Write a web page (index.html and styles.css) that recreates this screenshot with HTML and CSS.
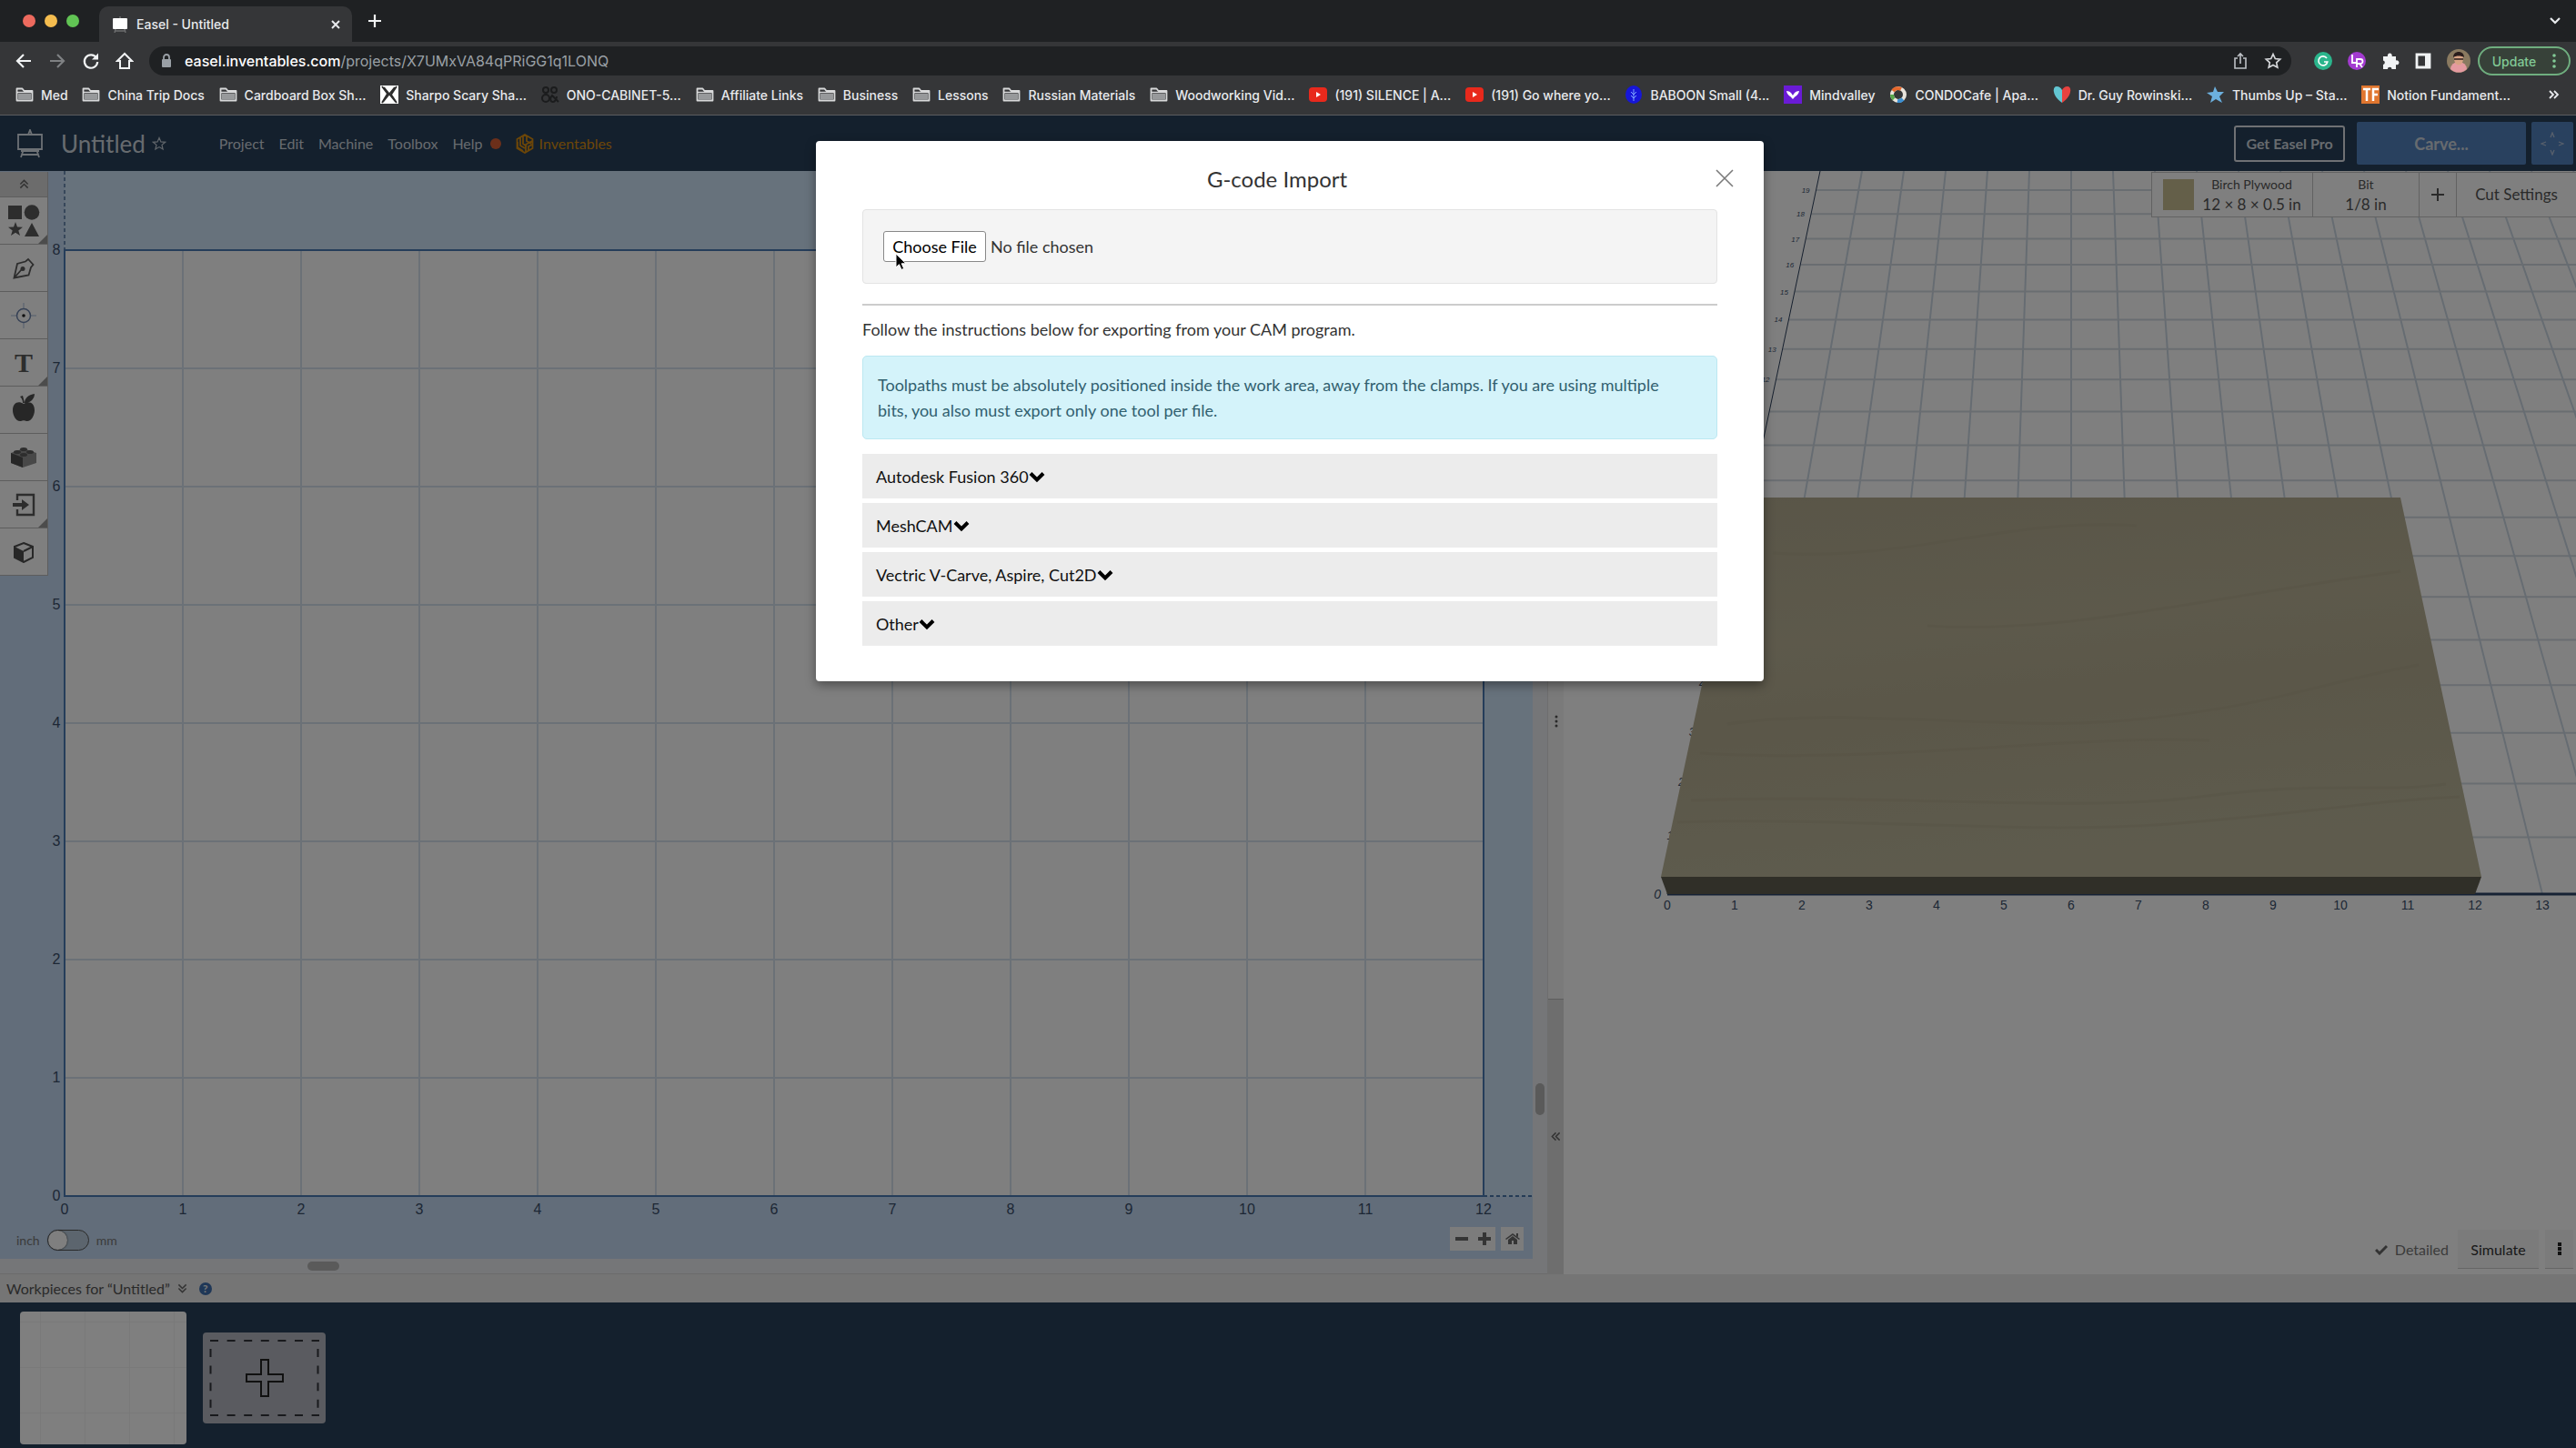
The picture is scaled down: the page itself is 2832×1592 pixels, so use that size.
FILE: index.html
```html
<!DOCTYPE html>
<html lang="en">
<head>
	<meta charset="UTF-8">
	<meta name="viewport" content="width=device-width, initial-scale=1.0">
	<title>Easel - Untitled</title>
	<link rel="stylesheet" href="styles.css">
</head>

<body>

	<!-- shared icons -->
	<svg class="sprite" aria-hidden="true">
		<symbol id="folder" viewBox="0 0 20 20">
			<path d="M1.5 16.5v-13h6l2 2.500h9v10.500z" fill="none" stroke="#d8d9da" stroke-width="1.800" stroke-linejoin="round"/>
			<path d="M3 9h14v6.500H3z" fill="#97999b"/>
			<path d="M2 7.500h16" stroke="#d8d9da" stroke-width="1.500"/>
		</symbol>
		<symbol id="youtube" viewBox="0 0 20 20">
			<rect x="0" y="2" width="20" height="16" rx="4" fill="#e8291c"/>
			<path d="M8 7l5 3-5 3z" fill="#fff"/>
		</symbol>
		<symbol id="chevron" viewBox="0 0 18 14">
			<path d="M2 3.500l7 7 7-7" fill="none" stroke="#000" stroke-width="4"/>
		</symbol>
		<symbol id="double" viewBox="0 0 12 12">
			<path d="M1.500 6L6 1.500 10.500 6M1.500 10.500L6 6l4.500 4.500" fill="none" stroke="#666" stroke-width="1.600"/>
		</symbol>
	</svg>

	<header class="browser">
		<div class="tabs">
			<div class="lights"><span class="red"></span><span class="yellow"></span><span class="green"></span></div>
			<div class="tab">
				<svg width="18" height="18" viewBox="0 0 18 18"><path d="M4 14l-1 4M14 14l1 4M3 16h12M9 0v2" stroke="#6c6d6e" stroke-width="1.500"/><rect x="1" y="2" width="16" height="12" rx="1" fill="#fff"/></svg>
				<span class="tab-title">Easel - Untitled</span>
				<button class="plain" aria-label="Close tab"><svg width="12" height="12" viewBox="0 0 12 12"><path d="M2 2l8 8M10 2l-8 8" stroke="#e8eaed" stroke-width="2"/></svg></button>
			</div>
			<button class="plain new-tab" aria-label="New tab"><svg width="16" height="16" viewBox="0 0 16 16"><path d="M8 1v14M1 8h14" stroke="#f1f3f4" stroke-width="2.200"/></svg></button>
			<button class="plain tab-search" aria-label="Search tabs"><svg width="14" height="10" viewBox="0 0 14 10"><path d="M2 2l5 5 5-5" fill="none" stroke="#e8eaed" stroke-width="2.200"/></svg></button>
		</div>

		<div class="address-row">
			<button class="plain" aria-label="Back"><svg width="20" height="20" viewBox="0 0 20 20"><path d="M18 10H3M10 3l-7 7 7 7" fill="none" stroke="#f1f3f4" stroke-width="2.200"/></svg></button>
			<button class="plain" aria-label="Forward"><svg width="20" height="20" viewBox="0 0 20 20"><path d="M2 10h15M10 3l7 7-7 7" fill="none" stroke="#7f8183" stroke-width="2.200"/></svg></button>
			<button class="plain" aria-label="Reload"><svg width="20" height="20" viewBox="0 0 20 20"><path d="M16 6.500A7.200 7.200 0 1 0 17.200 11" fill="none" stroke="#f1f3f4" stroke-width="2.200"/><path d="M18 1.500v7h-7z" fill="#f1f3f4"/></svg></button>
			<button class="plain" aria-label="Home"><svg width="20" height="20" viewBox="0 0 20 20"><path d="M10 2L2 10h3v8h10v-8h3z" fill="none" stroke="#f1f3f4" stroke-width="2"/></svg></button>
			<div class="address">
				<svg width="12" height="16" viewBox="0 0 12 16"><path d="M3 7V4a3 3 0 0 1 6 0v3" fill="none" stroke="#9aa0a6" stroke-width="1.800"/><rect x="1" y="6" width="10" height="9" rx="1" fill="#9aa0a6"/></svg>
				<p class="url"><b>easel.inventables.com</b>/projects/X7UMxVA84qPRiGG1q1LONQ</p>
				<button class="plain" aria-label="Share"><svg width="16" height="20" viewBox="0 0 16 20"><path d="M5 7H2v11h12V7h-3M8 13V2M5 5l3-3 3 3" fill="none" stroke="#bdc1c6" stroke-width="1.600"/></svg></button>
				<button class="plain" aria-label="Bookmark"><svg width="20" height="20" viewBox="0 0 20 20"><path d="M10 2.500l2.300 5 5.400.6-4 3.700 1.100 5.400-4.800-2.700-4.800 2.700 1.100-5.400-4-3.700 5.400-.6z" fill="none" stroke="#d5d7da" stroke-width="1.700"/></svg></button>
			</div>
			<div class="extensions">
				<svg width="20" height="20" viewBox="0 0 20 20"><circle cx="10" cy="10" r="10" fill="#2bb58c"/><path d="M14 7a5 5 0 1 0 .8 4H11" fill="none" stroke="#fff" stroke-width="1.600"/></svg>
				<svg width="20" height="20" viewBox="0 0 20 20"><circle cx="10" cy="10" r="10" fill="#a33ad0"/><path d="M5 3v9h5M10 17V8h4a2 2 0 0 1 0 5h-4M13 13l3 4" fill="none" stroke="#fff" stroke-width="1.800"/></svg>
				<svg width="20" height="20" viewBox="0 0 20 20"><path d="M2 5h5a2.500 2.500 0 1 1 4.600 0H16v4.500a2.500 2.500 0 1 1 0 4.600V19h-4.500a2.300 2.300 0 0 0-4.600 0H2v-5a2.300 2.300 0 0 0 0-4.500z" fill="#f1f3f4"/></svg>
				<svg width="18" height="18" viewBox="0 0 18 18"><path d="M2 2h14v14H2z" fill="none" stroke="#f1f3f4" stroke-width="2.800"/><path d="M11 2h5v14h-5z" fill="#f1f3f4"/></svg>
				<svg width="26" height="26" viewBox="0 0 26 26"><circle cx="13" cy="13" r="13" fill="#8a7a60"/><path d="M4 22a9 8 0 0 1 18 0 13 13 0 0 1-18 0z" fill="#e59aa0"/><ellipse cx="13" cy="11" rx="5" ry="6.500" fill="#d9a384"/><path d="M7 9c0-8 12-8 12 0-3-2-9-2-12 0z" fill="#2a1d1c"/><path d="M8 11h10" stroke="#2a1d1c" stroke-width="1.500"/></svg>
				<button class="update">Update <svg width="4" height="16" viewBox="0 0 4 16" fill="#81c995"><circle cx="2" cy="2" r="1.800"/><circle cx="2" cy="8" r="1.800"/><circle cx="2" cy="14" r="1.800"/></svg></button>
			</div>
		</div>

		<nav class="bookmarks" aria-label="Bookmarks">
			<a href="#"><svg class="fav"><use href="#folder"/></svg>Med</a>
			<a href="#"><svg class="fav"><use href="#folder"/></svg>China Trip Docs</a>
			<a href="#"><svg class="fav"><use href="#folder"/></svg>Cardboard Box Sh...</a>
			<a href="#"><svg class="fav" viewBox="0 0 20 20"><path d="M0 0h20v20H0z" fill="#fff"/><path d="M2 1l6 8-6 10M18 1l-6 9 6 9M4 2l13 16M16 2L3 18" stroke="#2c2c2c" stroke-width="1.800" fill="none"/></svg>Sharpo Scary Sha...</a>
			<a href="#"><svg class="fav" viewBox="0 0 20 20"><g fill="none" stroke="#1b1c1d" stroke-width="2"><circle cx="5" cy="5" r="3"/><circle cx="14" cy="5" r="3"/><circle cx="5" cy="14" r="4"/><path d="M19 18l-7-7c-3 3-2 7 1 7 2 0 4-3 4-6"/></g></svg>ONO-CABINET-5...</a>
			<a href="#"><svg class="fav"><use href="#folder"/></svg>Affiliate Links</a>
			<a href="#"><svg class="fav"><use href="#folder"/></svg>Business</a>
			<a href="#"><svg class="fav"><use href="#folder"/></svg>Lessons</a>
			<a href="#"><svg class="fav"><use href="#folder"/></svg>Russian Materials</a>
			<a href="#"><svg class="fav"><use href="#folder"/></svg>Woodworking Vid...</a>
			<a href="#"><svg class="fav"><use href="#youtube"/></svg>(191) SILENCE | A...</a>
			<a href="#"><svg class="fav"><use href="#youtube"/></svg>(191) Go where yo...</a>
			<a href="#"><svg class="fav" viewBox="0 0 20 20"><ellipse cx="10" cy="10" rx="9" ry="10" fill="#1616d8"/><path d="M10 4v13M7 7l3 3 3-3M7 11l3 3 3-3" stroke="#7fa6ff" fill="none"/></svg>BABOON Small (4...</a>
			<a href="#"><svg class="fav" viewBox="0 0 20 20"><path d="M0 0h20v20H0z" fill="#6a1bd6"/><path d="M3 6c4 0 6 3 7 5 1-2 3-5 7-5-1 5-4 5-7 9-3-4-6-4-7-9z" fill="#fff"/></svg>Mindvalley</a>
			<a href="#"><svg class="fav" viewBox="0 0 20 20"><g fill="none" stroke-width="4"><circle cx="10" cy="10" r="7" stroke="#e8e4dc"/><path d="M5 15a7 7 0 0 1-2-5" stroke="#58a84c"/><path d="M4 6a7 7 0 0 1 9-2" stroke="#e6682c"/><path d="M15 15a7 7 0 0 1-6 2" stroke="#3b8fd1"/></g></svg>CONDOCafe | Apa...</a>
			<a href="#"><svg class="fav" viewBox="0 0 20 20"><path d="M10 19C-1 12-1 1 4 1c3 0 5 2 6 4z" fill="#62c5d2"/><path d="M10 19c11-7 11-18 6-18-3 0-5 2-6 4z" fill="#e8423f"/></svg>Dr. Guy Rowinski...</a>
			<a href="#"><svg class="fav" viewBox="0 0 20 20"><path d="M9 1l3 6 7 0-5 5 3 7-7-4-6 4 2-7-6-4 7-1z" fill="#6cb0de"/></svg>Thumbs Up – Sta...</a>
			<a href="#"><svg class="fav" viewBox="0 0 20 20"><path d="M0 0h20v20H0z" fill="#e0762f"/><path d="M2 4h8M6 4v13M13 17V4h6M13 10h5" stroke="#fff" stroke-width="2.500" fill="none"/></svg>Notion Fundament...</a>
			<button class="plain more" aria-label="More bookmarks"><svg width="12" height="10" viewBox="0 0 12 10"><path d="M1 1l4 4-4 4M6 1l4 4-4 4" fill="none" stroke="#e8eaed" stroke-width="1.800"/></svg></button>
		</nav>
	</header>

	<div class="app">
		<header class="navbar">
			<svg class="logo" width="30" height="32" viewBox="0 0 30 32"><path d="M2 6h26v16H2zM13 6l2-5 2 5M5 24h20M8 22L5 31M22 22l3 9M6 28h18" fill="none" stroke="#dbe2ea" stroke-width="1.800"/></svg>
			<h1>Untitled</h1>
			<svg class="star" width="16" height="16" viewBox="0 0 16 16"><path d="M8 1.500l1.900 4.400 4.700.4-3.600 3.100 1.100 4.700L8 11.600l-4.100 2.500L5 9.400 1.400 6.300l4.700-.4z" fill="none" stroke="#c3ccd6" stroke-width="1.200"/></svg>
			<nav class="menu">
				<a href="#">Project</a>
				<a href="#">Edit</a>
				<a href="#">Machine</a>
				<a href="#">Toolbox</a>
				<a href="#">Help <span class="dot"></span></a>
				<a href="#" class="brand"><svg width="20" height="22" viewBox="0 0 20 22"><path d="M10 1l8.500 5v10L10 21l-8.500-5V6zM5 4v9l5 3M8 3v8l4 3M18 8l-7 4v8M18 12l-4 2v5M2 9v6l6 4M12 3v5l5 3" fill="none" stroke="#d98d10" stroke-width="1.800"/></svg>Inventables</a>
			</nav>
			<button class="pro">Get Easel Pro</button>
			<button class="carve">Carve...</button>
			<button class="jog" aria-label="Jog machine"><svg width="26" height="26" viewBox="0 0 26 26"><path d="M11 6l2-5 2 5M11 20l2 5 2-5M6 11l-5 2 5 2M20 11l5 2-5 2" fill="none" stroke="#aebfd8" stroke-width="1.300"/></svg></button>
		</header>

		<main class="editor">
			<section class="workspace">
				<div class="canvas">
					<svg class="drawing" id="grid2d"></svg>

					<div class="tools">
						<button class="collapse" aria-label="Collapse"><svg width="11" height="11"><use href="#double"/></svg></button>
						<button class="corner" aria-label="Shapes"><svg width="36" height="36" viewBox="0 0 36 36" fill="#5a5a5a"><path d="M1 1h15v15H1zM27 20l8 15H19zM9 19l2 5.500 6 .3-4.700 3.700L14 34l-5-3.200L4 34l1.700-5.500L1 24.800l6-.3z"/><circle cx="27" cy="8.500" r="8.300"/></svg></button>
						<button aria-label="Pen"><svg width="24" height="24" viewBox="0 0 24 24"><path d="M1.500 22.500L5 7l9-2.500L17 2l5.500 6-2.500 3-2.500 8.500zM2 22l8-9" fill="none" stroke="#5a5a5a" stroke-width="1.800"/><circle cx="11" cy="12.500" r="2.500" fill="#5a5a5a"/></svg></button>
						<button aria-label="Drill point"><svg width="30" height="30" viewBox="0 0 30 30"><path d="M15 1v7M15 22v7M1 15h7M22 15h7" stroke="#a5b9d8"/><circle cx="15" cy="15" r="7.500" fill="none" stroke="#6d83ab" stroke-width="1.500"/><circle cx="15" cy="15" r="1.800" fill="#222"/></svg></button>
						<button class="corner text-tool" aria-label="Text">T</button>
						<button class="apple" aria-label="Icons"><svg width="26" height="32" viewBox="0 0 26 32" fill="#4f4f4f"><path d="M13 12c6-4 12-1 12 7 0 6-4 13-9 12-2-1-4-1-6 0-5 1-9-6-9-12 0-8 6-11 12-7zM14 11c0-5 4-9 11-10 0 5-4 10-11 10zM9 4l3-1 2 8h-2c0-3-1-5-3-7z"/></svg></button>
						<button aria-label="Apps"><svg width="30" height="24" viewBox="0 0 30 24"><path d="M1 7l14-5 14 5v11l-15 5-13-5z" fill="#909090"/><path d="M1 7l13 5v11L1 18z" fill="#4f4f4f"/><g fill="#5a5a5a"><ellipse cx="15" cy="3" rx="4" ry="2"/><ellipse cx="8" cy="6" rx="4" ry="2"/><ellipse cx="22" cy="6" rx="4" ry="2"/><ellipse cx="15" cy="9" rx="4" ry="2"/></g></svg></button>
						<button class="corner" aria-label="Import"><svg width="26" height="26" viewBox="0 0 26 26"><path d="M6 8V2h18v22H6v-6" fill="none" stroke="#5a5a5a" stroke-width="2.400"/><path d="M1 11h10V7l8 6-8 6v-4H1z" fill="#5a5a5a"/></svg></button>
						<button aria-label="3D"><svg width="24" height="24" viewBox="0 0 24 24"><path d="M12 2l10 4v12l-10 5-10-5V6z" fill="none" stroke="#4f4f4f" stroke-width="2"/><path d="M2 6l10 5v12L2 18z" fill="#4f4f4f"/><path d="M12 11l10-5" stroke="#4f4f4f" stroke-width="2"/></svg></button>
					</div>

					<label class="units">inch <input type="checkbox" role="switch"><span class="switch"></span> mm</label>

					<div class="zoom">
						<div class="zoom-pair">
							<button aria-label="Zoom out"><svg width="14" height="14" viewBox="0 0 14 14"><path d="M0 7h14" stroke="#6a6a6a" stroke-width="4"/></svg></button>
							<button aria-label="Zoom in"><svg width="14" height="14" viewBox="0 0 14 14"><path d="M0 7h14M7 0v14" stroke="#6a6a6a" stroke-width="4"/></svg></button>
						</div>
						<button aria-label="Fit"><svg width="16" height="14" viewBox="0 0 16 14" fill="#6a6a6a"><path d="M8 1l8 6-1 1-7-5-7 5-1-1zM8 4l5 4v5H9V9H7v4H3V8zM12 1h2v4l-2-1z"/></svg></button>
					</div>
				</div>
				<div class="scroll-y"><span></span></div>
				<div class="scroll-x"><span></span></div>
			</section>

			<div class="splitter">
				<div class="drag"><svg width="4" height="14" viewBox="0 0 4 14" fill="#555"><circle cx="2" cy="2" r="1.500"/><circle cx="2" cy="7" r="1.500"/><circle cx="2" cy="12" r="1.500"/></svg></div>
				<button class="fold" aria-label="Collapse preview"><svg class="turn-left" width="11" height="11"><use href="#double"/></svg></button>
			</div>

			<section class="preview">
				<svg class="drawing" id="grid3d"></svg>
				<div class="settings">
					<div class="material">
						<span class="swatch"></span>
						<p><small>Birch Plywood</small>12 × 8 × 0.5 in</p>
					</div>
					<div class="bit"><p><small>Bit</small>1/8 in</p></div>
					<button class="add-bit" aria-label="Add bit"><svg width="14" height="14" viewBox="0 0 14 14"><path d="M0 7h14M7 0v14" stroke="#555" stroke-width="2"/></svg></button>
					<button class="cut">Cut Settings</button>
				</div>
				<div class="simulate">
					<span class="detailed"><svg width="14" height="12" viewBox="0 0 14 12"><path d="M1 6l4 4 8-8" fill="none" stroke="#666" stroke-width="3"/></svg>Detailed</span>
					<button>Simulate</button>
					<button class="kebab" aria-label="More"><svg width="4" height="14" viewBox="0 0 4 14" fill="#222"><path d="M0 0h4v4H0zM0 5h4v4H0zM0 10h4v4H0z"/></svg></button>
				</div>
			</section>
		</main>

		<footer>
			<div class="pieces-bar">
				<h2>Workpieces for “Untitled”</h2>
				<svg class="turn-down" width="11" height="11"><use href="#double"/></svg>
				<a href="#" class="help">?</a>
			</div>
			<div class="pieces">
				<button class="piece" aria-label="Workpiece 1"></button>
				<button class="add-piece" aria-label="Add workpiece">
					<svg width="135" height="100" viewBox="0 0 135 100" fill="none" stroke="#32343b" stroke-width="2"><path d="M8 9h120M8 91h120" stroke-dasharray="9 9.600"/><path d="M8.500 18v66M126.500 18v66" stroke-dasharray="9 9.600"/><path d="M64 30h8v16h16v8H72v16h-8V54H48v-8h16z" stroke="#222"/></svg>
				</button>
			</div>
		</footer>

		<div class="backdrop">
			<div class="modal" role="dialog" aria-labelledby="modal-title">
				<div class="modal-head">
					<h3 id="modal-title">G-code Import</h3>
					<button class="plain" aria-label="Close"><svg width="20" height="20" viewBox="0 0 20 20"><path d="M1 1l18 18M19 1L1 19" stroke="#7a7a7a" stroke-width="1.600"/></svg></button>
				</div>
				<div class="well"><input type="file" aria-label="G-code file"></div>
				<hr>
				<p>Follow the instructions below for exporting from your CAM program.</p>
				<p class="alert">Toolpaths must be absolutely positioned inside the work area, away from the clamps. If you are using multiple bits, you also must export only one tool per file.</p>
				<div class="guides">
					<button>Autodesk Fusion 360<svg width="18" height="14"><use href="#chevron"/></svg></button>
					<button>MeshCAM<svg width="18" height="14"><use href="#chevron"/></svg></button>
					<button>Vectric V-Carve, Aspire, Cut2D<svg width="18" height="14"><use href="#chevron"/></svg></button>
					<button>Other<svg width="18" height="14"><use href="#chevron"/></svg></button>
				</div>
				<svg class="pointer" width="14" height="20" viewBox="0 0 14 20"><path d="M1 1v15l3.500-3.300L7 18.500l2.700-1.200-2.500-5.500H12z" fill="#000" stroke="#fff"/></svg>
			</div>
		</div>
	</div>

	<script src="grids.js"></script>
</body>

</html>
```
FILE: styles.css
```css
*{
	margin: 0;
	padding: 0;
	box-sizing: border-box;
}

body{
	display: flex;
	flex-direction: column;
	height: 100vh;
	overflow: hidden;
	font-family: Lato, "Liberation Sans", sans-serif;
	font-size: 18px;
	color: #333;
}

button, input {
	font: inherit;
	color: inherit;
}
button {
	border: none;
	display: flex;
	align-items: center;
	justify-content: center;
}
.plain {
	background: none;
}
a {
	color: inherit;
	text-decoration: none;
}
.sprite {
	position: absolute;
	width: 0;
	height: 0;
}

/* browser */
.browser {
	background-color: #353638;
	color: #e8eaed;
	font-family: Inter, Roboto, sans-serif;
	font-size: 14px;
	font-weight: 500;
	border-bottom: 1px solid #5b5d60;
}
.tabs {
	display: flex;
	align-items: center;
	height: 46px;
	background-color: #1f2123;
}
.lights {
	display: flex;
	gap: 10px;
	width: 109px;
	padding-left: 25px;
}
.lights span {
	width: 14px;
	height: 14px;
	border-radius: 50%;
}
.red { background-color: #ed6a5e; }
.yellow { background-color: #f5bd4f; }
.green { background-color: #61c454; }
.tab {
	display: flex;
	align-items: center;
	align-self: flex-end;
	gap: 9px;
	width: 278px;
	height: 39px;
	padding: 0 12px 0 14px;
	border-radius: 10px 10px 0 0;
	background-color: #353638;
}
.tab-title {
	flex: 1;
}
.new-tab {
	margin-left: 17px;
}
.tab-search {
	margin-left: auto;
	margin-right: 16px;
}
.address-row {
	display: flex;
	align-items: center;
	gap: 17px;
	height: 42px;
	padding: 0 6px 0 16px;
}
.address {
	flex: 1;
	display: flex;
	align-items: center;
	gap: 14px;
	height: 32px;
	padding: 0 10px 0 13px;
	border-radius: 16px;
	background-color: #1f2123;
}
.address .plain {
	margin-left: 4px;
}
.url {
	flex: 1;
	font-size: 16px;
	font-weight: 400;
	color: #9aa0a6;
}
.url b {
	font-weight: 500;
	color: #fff;
}
.extensions {
	display: flex;
	align-items: center;
	gap: 17px;
	margin-left: 8px;
}
.update {
	gap: 18px;
	width: 102px;
	height: 32px;
	margin-left: -9px;
	border: 2px solid #6fae7f;
	border-radius: 16px;
	background-color: #374139;
	color: #81c995;
}
.bookmarks {
	display: flex;
	align-items: center;
	justify-content: space-between;
	height: 38px;
	padding: 0 18px 6px 17px;
	white-space: nowrap;
}
.bookmarks a {
	display: flex;
	align-items: center;
	gap: 8px;
}
.fav {
	width: 20px;
	height: 20px;
}
.more {
	margin-left: 26px;
}

/* app */
.app {
	position: relative;
	flex: 1;
	display: flex;
	flex-direction: column;
	min-height: 0;
}
.navbar {
	display: flex;
	align-items: center;
	height: 61px;
	padding: 0 3px 0 18px;
	background-color: #28405a;
	color: #cfd6de;
}
h1 {
	margin-left: 19px;
	font-size: 26px;
	font-weight: 400;
}
.star {
	margin-left: 7px;
}
.menu {
	flex: 1;
	display: flex;
	gap: 16px;
	margin-left: 58px;
	font-size: 16px;
}
.menu a {
	display: flex;
	align-items: center;
	gap: 8px;
}
.dot {
	width: 12px;
	height: 12px;
	border-radius: 50%;
	background-color: #d95f35;
}
.menu .brand {
	gap: 6px;
	color: #d98d10;
}
.pro {
	width: 122px;
	height: 40px;
	border: 2px solid #dfe3e8;
	border-radius: 3px;
	background: none;
	font-size: 16px;
	font-weight: 700;
}
.carve {
	width: 186px;
	height: 47px;
	margin: 0 6px 0 13px;
	border-radius: 2px;
	background-color: #5382be;
	font-weight: 700;
}
.jog {
	width: 46px;
	height: 47px;
	border-radius: 2px;
	background-color: #5382be;
}

.editor {
	flex: 1;
	display: grid;
	grid-template-columns: minmax(0, 1701fr) 18px minmax(0, 1113fr);
	min-height: 0;
}
.workspace {
	display: grid;
	grid-template-columns: 1fr 16px;
	grid-template-rows: 1fr 17px;
	background-color: #eaecf0;
}
.canvas {
	position: relative;
	overflow: hidden;
	background-color: #c4daf4;
}
.drawing {
	display: block;
	width: 100%;
	height: 100%;
	font-family: "Liberation Sans", Arial, sans-serif;
}
.scroll-y {
	padding: 1003px 3px 0;
}
.scroll-y span {
	display: block;
	height: 35px;
	border-radius: 5px;
	background-color: #b4b4b4;
}
.scroll-x {
	grid-column: 1 / 3;
	padding: 3px 0 0 338px;
	border-bottom: 1px solid #d6d6d6;
}
.scroll-x span {
	display: block;
	width: 35px;
	height: 10px;
	border-radius: 5px;
	background-color: #b4b4b4;
}

.tools {
	position: absolute;
	left: 0;
	top: 1px;
	width: 53px;
	background-color: #fff;
	border-right: 1px solid #bbb;
}
.tools button {
	position: relative;
	width: 100%;
	height: 52px;
	background-color: #fff;
	border-bottom: 1px solid #bbb;
}
.tools .collapse {
	height: 28px;
	background-color: #d8d8d8;
}
.tools .apple {
	padding-bottom: 6px;
}
.corner::after {
	content: "";
	position: absolute;
	right: 0;
	bottom: 0;
	border: 5px solid #999;
	border-top-color: transparent;
	border-left-color: transparent;
}
.text-tool {
	font-family: "Liberation Serif", serif;
	font-size: 30px;
	font-weight: 700;
	color: #5a5a5a;
}
.units {
	position: absolute;
	left: 18px;
	bottom: 9px;
	display: flex;
	align-items: center;
	gap: 8px;
	font-size: 14px;
	color: #777;
}
.units input {
	position: absolute;
	opacity: 0;
}
.switch {
	width: 46px;
	height: 23px;
	border: 1px solid #555;
	border-radius: 12px;
	background-color: #b8cbdc;
}
.switch::before {
	content: "";
	display: block;
	width: 21px;
	height: 21px;
	border-radius: 50%;
	background-color: #fff;
	box-shadow: 0 0 2px #222;
}
.zoom {
	position: absolute;
	right: 10px;
	bottom: 9px;
	display: flex;
	gap: 6px;
}
.zoom-pair {
	display: flex;
}
.zoom button {
	width: 25px;
	height: 26px;
	background-color: #f8f8f8;
}

.splitter {
	display: grid;
	grid-template-rows: 3fr 1fr;
	border-left: 1px solid #ddd;
}
.drag, .fold {
	display: flex;
	align-items: center;
	justify-content: center;
	width: 100%;
}
.drag {
	padding-top: 301px;
	background-color: #f4f4f4;
}
.fold {
	border-top: 1px solid #bbb;
	background-color: #dcdcdc;
}
.turn-left {
	transform: rotate(-90deg);
}
.turn-down {
	transform: rotate(180deg);
}

.preview {
	position: relative;
	background-color: #fff;
}
.settings {
	position: absolute;
	top: 1px;
	right: 0;
	display: flex;
	height: 50px;
	border: 1px solid #c4c4c4;
	border-right: none;
	background-color: #fff;
	color: #555;
	font-size: 17px;
	line-height: 22px;
	text-align: center;
}
.settings > * {
	display: flex;
	align-items: center;
	justify-content: center;
	background: none;
	border-right: 1px solid #c4c4c4;
}
.settings small {
	display: block;
	font-size: 14px;
}
.material {
	gap: 9px;
	width: 177px;
}
.swatch {
	width: 34px;
	height: 34px;
	background-color: #c9bf93;
}
.bit {
	width: 117px;
}
.add-bit {
	width: 41px;
}
.settings .cut {
	width: 131px;
	border-right: none;
}
.simulate {
	position: absolute;
	right: 3px;
	bottom: 6px;
	display: flex;
	align-items: center;
	gap: 7px;
	font-size: 16px;
	color: #777;
}
.detailed {
	display: flex;
	align-items: center;
	gap: 8px;
	margin-right: 3px;
}
.simulate button {
	width: 89px;
	height: 43px;
	background-color: #f7f7f7;
	border-bottom: 1px solid #ccc;
	color: #333;
}
.simulate .kebab {
	width: 31px;
}

.pieces-bar {
	display: flex;
	align-items: center;
	gap: 8px;
	height: 31px;
	padding-left: 7px;
	background-color: #eaeaea;
	color: #555;
}
h2 {
	font-size: 16px;
	font-weight: 400;
}
.help {
	width: 14px;
	height: 14px;
	margin-left: 5px;
	border-radius: 50%;
	background-color: #3f6fae;
	color: #eee;
	font-size: 12px;
	font-weight: 700;
	line-height: 14px;
	text-align: center;
}
.pieces {
	display: flex;
	align-items: center;
	gap: 18px;
	height: 160px;
	padding: 6px 22px 0;
	background-color: #28405a;
}
.piece {
	width: 183px;
	height: 146px;
	border-radius: 4px;
	background-color: #fff;
	background-image: linear-gradient(#f2f2f2 1px, transparent 1px), linear-gradient(90deg, #f2f2f2 1px, transparent 1px);
	background-size: 49px 50px;
	background-position: 22px 11px;
}
.add-piece {
	border-radius: 4px;
	background-color: #b4b7c0;
}

/* modal */
.backdrop {
	position: absolute;
	inset: 0;
	display: flex;
	align-items: flex-start;
	justify-content: center;
	padding: 28px 0 0 4px;
	background-color: rgba(0, 0, 0, .5);
}
.modal {
	position: relative;
	width: 1042px;
	padding: 28px 51px 39px;
	border-radius: 4px;
	background-color: #fff;
	box-shadow: 0 4px 12px rgba(0, 0, 0, .4);
	line-height: 28px;
}
.modal-head {
	display: flex;
	height: 47px;
	margin-right: -18px;
}
h3 {
	flex: 1;
	margin-left: -26px;
	font-size: 24px;
	font-weight: 400;
	text-align: center;
}
.modal-head button {
	height: 26px;
}
.well {
	padding: 23px 22px;
	border: 1px solid #e3e3e3;
	border-radius: 4px;
	background-color: #f4f4f4;
}
.well input {
	display: block;
	width: 100%;
	height: 34px;
}
.well input::file-selector-button {
	width: 113px;
	height: 34px;
	margin-right: 5px;
	border: 1px solid #888;
	border-radius: 3px;
	background-color: #fff;
	font: inherit;
}
hr {
	margin: 22px 0 12px;
	border: none;
	border-top: 2px solid #ccc;
}
.alert {
	margin: 15px 0 16px;
	padding: 17px 48px 17px 16px;
	border: 1px solid #bce8f1;
	border-radius: 5px;
	background-color: #d4f3fa;
	color: #31606f;
}
.guides {
	display: flex;
	flex-direction: column;
	gap: 5px;
}
.guides button {
	justify-content: flex-start;
	height: 49px;
	padding-left: 15px;
	background-color: #ececec;
	color: #111;
}
.pointer {
	position: absolute;
	left: 87px;
	top: 123px;
}
```
FILE: grids.js
```js
const grid2d = document.getElementById("grid2d");
const grid3d = document.getElementById("grid3d");

function line(x1, y1, x2, y2, color, width = 2, extra = "") {
	return `<line x1="${x1}" y1="${y1}" x2="${x2}" y2="${y2}" stroke="${color}" stroke-width="${width}" ${extra}/>`;
}
function label(x, y, text, size = 16, extra = 'text-anchor="middle"') {
	return `<text x="${x}" y="${y}" font-size="${size}" fill="#3b4f6b" ${extra}>${text}</text>`;
}

// flat work area, 130px per inch
function drawWorkArea() {
	const left = 71, bottom = 1127, inch = 130, cols = 12, rows = 8;
	const right = left + cols * inch, top = bottom - rows * inch;
	let out = `<rect x="${left}" y="0" width="100%" height="${bottom}" fill="#cee4f8"/>`;
	out += `<rect x="${left}" y="${top}" width="${right - left}" height="${bottom - top}" fill="#fff"/>`;
	for (let i = 0; i <= cols; i++) {
		if (i > 0 && i < cols) out += line(left + i * inch, top, left + i * inch, bottom, "#d6e2ee");
		out += label(left + i * inch, bottom + 20, i);
	}
	for (let j = 0; j <= rows; j++) {
		if (j > 0 && j < rows) out += line(left, bottom - j * inch, right, bottom - j * inch, "#d6e2ee");
		out += label(62, bottom - j * inch + 5, j);
	}
	out += line(left, 0, left, top, "#6f8fb5", 2, 'stroke-dasharray="4 3"');
	out += line(right, bottom, 1701, bottom, "#4a78ad", 2, 'stroke-dasharray="4 3"');
	out += `<rect x="${left}" y="${top}" width="${right - left}" height="${bottom - top}" fill="none" stroke="#4a7bb5" stroke-width="2"/>`;
	grid2d.innerHTML = out;
}

// bed in perspective: every column runs to the vanishing point
function drawBed() {
	const vx = 558, vy = -1306, base = 795, inch = 74, middle = 6;
	const rowY = j => vy + (base - vy) / (1 + 0.0307 * j);
	const colX = (i, y) => vx + (i - middle) * inch * (y - vy) / (base - vy);
	let out = "";
	for (let i = 1; i <= 19; i++) {
		out += line(colX(i, 0), 0, colX(i, base), base, "#cdd9e5");
		const y = rowY(i);
		out += line(colX(0, y), y, 1200, y, "#d3dae2");
		out += label(colX(0, y) - 7, y + 3, i, i > 9 ? 8 : 12, 'text-anchor="end" font-style="italic"');
	}
	out += line(colX(0, 0), 0, colX(0, base), base, "#2c3f5c", 1);
	out += line(colX(0, base), base, 1200, base, "#2c4468", 3);
	out += label(107, base + 5, 0, 14, 'text-anchor="end" font-style="italic"');
	for (let i = 0; i <= 13; i++) {
		out += label(colX(i, base), base + 17, i, 14);
	}
	out += `<defs><linearGradient id="wood" x1="0" y1="0" x2=".2" y2="1"><stop offset="0" stop-color="#b3ab90"/><stop offset=".4" stop-color="#bab397"/><stop offset=".6" stop-color="#b6ae92"/><stop offset="1" stop-color="#bcb79b"/></linearGradient></defs>`;
	out += `<path d="M196 359h724l89 417H107z" fill="url(#wood)"/>`;
	out += `<g fill="none" stroke="#aba287" stroke-width="3" opacity=".35"><path d="M180 608c150-20 300 10 450-5s200-40 310-60M150 640c200 12 400-20 560-14M140 692c200-8 420 14 560-4s200-4 270-14M125 716c200-6 380 14 540 2s220-26 320-30M230 420c150 10 260-40 400-30M400 500c150 10 300-30 520-60"/></g>`;
	out += `<path d="M107 776h902l-7 19H114z" fill="#615f50"/>`;
	grid3d.innerHTML = out;
}

drawWorkArea();
drawBed();
```
